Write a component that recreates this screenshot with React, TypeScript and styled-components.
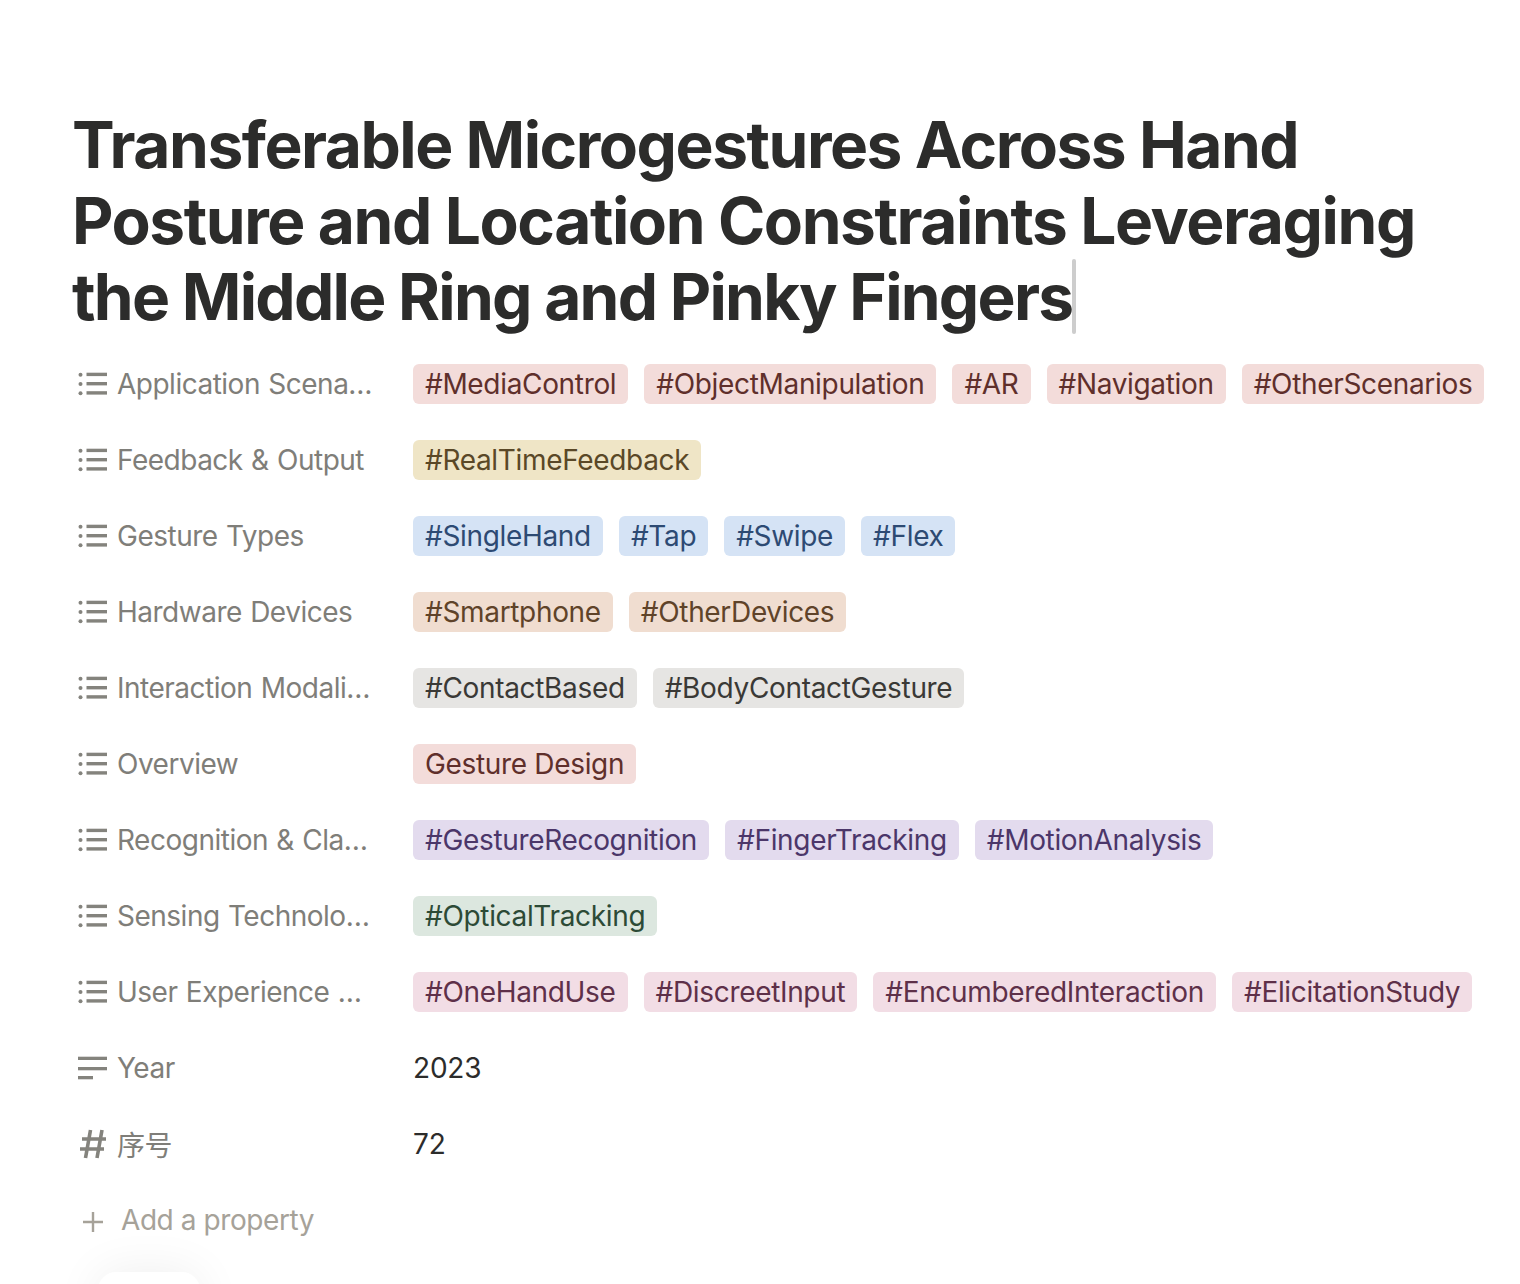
import React from 'react';
import styled, { createGlobalStyle } from 'styled-components';

type Tone = 'red' | 'yellow' | 'blue' | 'orange' | 'gray' | 'purple' | 'green' | 'pink';

const tones: Record<Tone, { bg: string; fg: string }> = {
  red: { bg: '#f3dcda', fg: '#5f2f2b' },
  yellow: { bg: '#efe5c6', fg: '#5a4827' },
  blue: { bg: '#d5e3f5', fg: '#2d4a73' },
  orange: { bg: '#f0ddd0', fg: '#5f4329' },
  gray: { bg: '#e6e5e3', fg: '#3a3936' },
  purple: { bg: '#e3dbee', fg: '#4b3669' },
  green: { bg: '#dce7df', fg: '#2c4a36' },
  pink: { bg: '#f2dde5', fg: '#5e3049' },
};

interface Property {
  name: string;
  tone?: Tone;
  tags?: string[];
  value?: string;
  icon: 'list' | 'text' | 'number';
}

const titleLines = [
  { text: 'Transferable Microgestures Across Hand', spacing: -1.47 },
  { text: 'Posture and Location Constraints Leveraging', spacing: -1.41 },
  { text: 'the Middle Ring and Pinky Fingers', spacing: -1.73 },
];

const properties: Property[] = [
  { name: 'Application Scena…', icon: 'list', tone: 'red', tags: ['#MediaControl', '#ObjectManipulation', '#AR', '#Navigation', '#OtherScenarios'] },
  { name: 'Feedback & Output', icon: 'list', tone: 'yellow', tags: ['#RealTimeFeedback'] },
  { name: 'Gesture Types', icon: 'list', tone: 'blue', tags: ['#SingleHand', '#Tap', '#Swipe', '#Flex'] },
  { name: 'Hardware Devices', icon: 'list', tone: 'orange', tags: ['#Smartphone', '#OtherDevices'] },
  { name: 'Interaction Modali…', icon: 'list', tone: 'gray', tags: ['#ContactBased', '#BodyContactGesture'] },
  { name: 'Overview', icon: 'list', tone: 'red', tags: ['Gesture Design'] },
  { name: 'Recognition & Cla…', icon: 'list', tone: 'purple', tags: ['#GestureRecognition', '#FingerTracking', '#MotionAnalysis'] },
  { name: 'Sensing Technolo…', icon: 'list', tone: 'green', tags: ['#OpticalTracking'] },
  { name: 'User Experience …', icon: 'list', tone: 'pink', tags: ['#OneHandUse', '#DiscreetInput', '#EncumberedInteraction', '#ElicitationStudy'] },
  { name: 'Year', icon: 'text', value: '2023' },
  { name: '序号', icon: 'number', value: '72' },
];

const PropIcon: React.FC<{ kind: Property['icon'] }> = ({ kind }) => {
  if (kind === 'list') {
    return (
      <svg width="30" height="24" viewBox="0 0 30 24" fill="#84837d">
        <circle cx="2.5" cy="2.8" r="2" />
        <circle cx="2.5" cy="12" r="2" />
        <circle cx="2.5" cy="21.2" r="2" />
        <rect x="8.5" y="0.7" width="20.5" height="3.4" />
        <rect x="8.5" y="10" width="20.5" height="3.4" />
        <rect x="8.5" y="19.2" width="20.5" height="3.4" />
      </svg>
    );
  }
  if (kind === 'text') {
    return (
      <svg width="30" height="24" viewBox="0 0 30 24" fill="#84837d">
        <rect x="0" y="0.7" width="29" height="3.3" />
        <rect x="0" y="11" width="29" height="3.3" />
        <rect x="0" y="20" width="15" height="3.3" />
      </svg>
    );
  }
  return (
    <svg width="30" height="30" viewBox="0 0 30 30" fill="none" stroke="#84837d" strokeWidth="3.6">
      <path d="M12.5 1 L7.5 29 M24 1 L19 29 M4 10 H28 M2 20 H26" />
    </svg>
  );
};

const App: React.FC = () => (
  <>
    <GlobalStyle />
    <Page>
      <Title>
        {titleLines.map((line, i) => (
          <TitleLine key={line.text} style={{ letterSpacing: line.spacing }}>
            {line.text}
            {i === titleLines.length - 1 && <Caret />}
          </TitleLine>
        ))}
      </Title>
      <List>
        {properties.map(p => (
          <Row key={p.name}>
            <Label>
              <IconSlot>
                <PropIcon kind={p.icon} />
              </IconSlot>
              <span>{p.name}</span>
            </Label>
            {p.tags ? (
              <Tags>
                {p.tags.map(t => (
                  <Tag key={t} $tone={p.tone || 'gray'}>
                    {t}
                  </Tag>
                ))}
              </Tags>
            ) : (
              <Value>{p.value}</Value>
            )}
          </Row>
        ))}
        <AddRow>
          <PlusIcon width="22" height="22" viewBox="0 0 22 22" stroke="#a6a299" strokeWidth="2.4">
            <path d="M11 1 V21 M1 11 H21" />
          </PlusIcon>
          <span>Add a property</span>
        </AddRow>
      </List>
      <Floating />
    </Page>
  </>
);

const GlobalStyle = createGlobalStyle`
  html, body {
    margin: 0;
    background: #fff;
  }
  body {
    font-family: Inter, "Noto Sans CJK SC", sans-serif;
  }
`;

const Page = styled.div`
  position: relative;
  height: 1284px;
  overflow: hidden;
  padding: 107px 0 0 72px;
  box-sizing: border-box;
`;

const Title = styled.h1`
  margin: 0;
  font-size: 64px;
  line-height: 76px;
  font-weight: 700;
  color: #2c2c2b;
`;

const TitleLine = styled.div`
  white-space: nowrap;
`;

const Caret = styled.span`
  display: inline-block;
  width: 3.5px;
  height: 75px;
  border-radius: 2px;
  background: #cdcdcd;
  vertical-align: -14px;
`;

const List = styled.div`
  margin-top: 11px;
  display: flex;
  flex-direction: column;
`;

const Row = styled.div`
  display: flex;
  align-items: center;
  height: 76px;
`;

const Label = styled.div`
  display: flex;
  align-items: center;
  width: 341px;
  flex-shrink: 0;
  font-size: 28px;
  letter-spacing: -0.5px;
  word-spacing: 1px;
  color: #7f7e79;
`;

const IconSlot = styled.div`
  display: flex;
  align-items: center;
  width: 45px;
  padding-left: 6px;
  box-sizing: border-box;
`;

const Tags = styled.div`
  display: flex;
  gap: 16px;
`;

const Tag = styled.span<{ $tone: Tone }>`
  height: 40px;
  line-height: 40px;
  padding: 0 12px;
  border-radius: 6px;
  font-size: 28px;
  letter-spacing: -0.33px;
  white-space: nowrap;
  background: ${p => tones[p.$tone].bg};
  color: ${p => tones[p.$tone].fg};
`;

const Value = styled.span`
  font-size: 28px;
  letter-spacing: -0.2px;
  color: #2c2c2b;
`;

const AddRow = styled.div`
  display: flex;
  align-items: center;
  height: 76px;
  gap: 17px;
  padding-left: 10px;
  font-size: 28px;
  letter-spacing: -0.42px;
  color: #a6a299;
`;

const PlusIcon = styled.svg`
  position: relative;
  top: 2px;
`;

const Floating = styled.div`
  position: absolute;
  left: 98px;
  top: 1272px;
  width: 102px;
  height: 60px;
  border-radius: 18px;
  background: #fff;
  box-shadow: 0 0 48px rgba(0, 0, 0, 0.07);
`;

export default App;
